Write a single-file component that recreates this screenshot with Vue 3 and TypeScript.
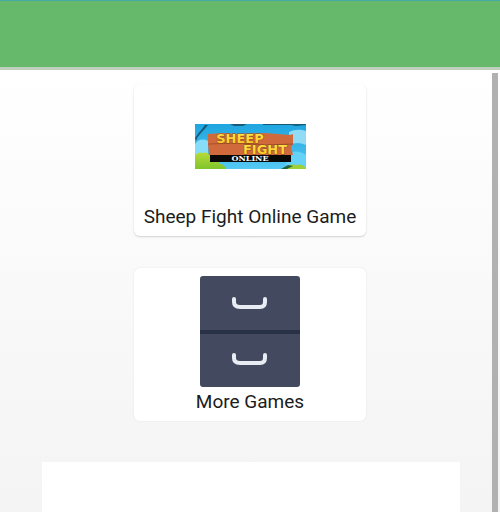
<script setup lang="ts">
interface Game {
  title: string
  href: string
  art: 'banner' | 'drawer'
}

const games: Game[] = [
  { title: 'Sheep Fight Online Game', href: '#sheep-fight', art: 'banner' },
  { title: 'More Games', href: '#more-games', art: 'drawer' },
]
</script>

<template>
  <div class="app">
    <header class="bar"></header>
    <div class="body">
      <main class="content">
        <nav class="games">
          <a v-for="game in games" :key="game.href" class="card" :class="game.art" :href="game.href">
            <svg v-if="game.art === 'banner'" class="art" width="111" height="45" viewBox="0 0 111 45" aria-hidden="true">
              <defs>
                <linearGradient id="sky" x1="0" y1="0" x2="0" y2="1">
                  <stop offset="0" stop-color="#1fa5df" />
                  <stop offset="1" stop-color="#55c9f3" />
                </linearGradient>
                <linearGradient id="leaf" x1="0" y1="0" x2="0" y2="1">
                  <stop offset="0" stop-color="#b8da3a" />
                  <stop offset="1" stop-color="#7fc52b" />
                </linearGradient>
                <linearGradient id="gold" x1="0" y1="0" x2="0" y2="1">
                  <stop offset="0" stop-color="#ffe84a" />
                  <stop offset="1" stop-color="#fcc222" />
                </linearGradient>
              </defs>
              <rect width="111" height="45" fill="url(#sky)" />
              <path d="M0 20Q5 13 13 17V31H0Z" fill="#87dcf7" />
              <path d="M94 8Q102 4 111 7V21Q102 17 95 21Z" fill="#91dcf4" />
              <path d="M94 29Q103 25 111 31V45H90Z" fill="#65d2f7" />
              <path d="M10 1H13Q10 5 6 9Q2 13 1 17L0 14Q3 9 7 5ZM35 0H52L48 2H39ZM68 0H111V1L101 2L96 1H68Z" fill="#175b79" />
              <path d="M0 32Q3 27 7 29Q13 27 16 34Q21 34 25 40Q29 40 31 45H0Z" fill="url(#leaf)" />
              <path d="M87 45Q95 39 101 41Q108 39 111 45Z" fill="#9ed037" />
              <path d="M86 45L93 41L98 42L92 45Z" fill="#22623c" />
              <path d="M13 10L28 9L45 10L70 9L95 11L98 10L98 20L96 23L98 31L14 31L13 20Z" fill="#d06a3c" />
              <path d="M13 20L46 19L70 21L98 20" fill="none" stroke="#a84f2b" />
              <rect x="15" y="31" width="81" height="7" fill="#080808" />
              <g text-anchor="middle">
                <text x="45" y="19" class="gold">SHEEP</text>
                <text x="70" y="30" class="gold">FIGHT</text>
                <text x="55" y="37" class="online">ONLINE</text>
              </g>
            </svg>
            <svg v-else class="art" width="100" height="111" viewBox="0 0 100 111" aria-hidden="true">
              <rect width="100" height="111" rx="3" fill="#434a60" />
              <rect y="54" width="100" height="4" fill="#293146" />
              <path d="M34 23V26Q34 31 40 31H60Q65 31 65 26V23M34 79V82Q34 87 40 87H60Q65 87 65 82V79" fill="none" stroke="#e8edf4" stroke-width="4" stroke-linecap="round" />
            </svg>
            <span class="title">{{ game.title }}</span>
          </a>
        </nav>
        <section class="panel"></section>
      </main>
      <div class="scroll"></div>
    </div>
  </div>
</template>

<style>
body {
  margin: 0;
}
</style>

<style scoped>
.app {
  display: flex;
  flex-direction: column;
  min-height: 100vh;
  font-family: Roboto, sans-serif;
}
.bar {
  box-sizing: border-box;
  height: 70px;
  border-top: 1px solid #43aaa7;
  border-bottom: 3px solid #bfd0bd;
  background: #66b96a;
}
.body {
  display: flex;
  flex: 1;
  padding-right: 2px;
  background: linear-gradient(#fff, #f8f8f8 60%, #f4f4f4);
}
.content {
  display: flex;
  flex: 1;
  flex-direction: column;
  gap: 41px;
  padding: 14px 32px 0 42px;
}
.games {
  display: grid;
  justify-content: center;
  gap: 32px;
  padding-right: 2px;
}
.card {
  display: flex;
  flex-direction: column;
  align-items: center;
  padding: 8px 10px 7px;
  border-radius: 6px;
  background: #fff;
  box-shadow: 0 1px 2px #d0d0d0;
  color: #1c1c1c;
  text-decoration: none;
}
.banner {
  gap: 36px;
  padding-top: 40px;
}
.drawer {
  gap: 3px;
  box-shadow: 0 0 2px #e2e2e2;
}
.art {
  display: block;
}
.gold {
  font: 700 13px "DejaVu Sans", sans-serif;
  fill: url(#gold);
  stroke: #8a4a1c;
  stroke-width: 1px;
  paint-order: stroke;
}
.online {
  font: 700 8px "DejaVu Serif", serif;
  fill: #fff;
}
.title {
  font-size: 19px;
  line-height: 24px;
}
.panel {
  flex: 1;
  background: #fff;
}
.scroll {
  width: 6px;
  margin-top: 3px;
  background: #b1b1b1;
}
</style>
